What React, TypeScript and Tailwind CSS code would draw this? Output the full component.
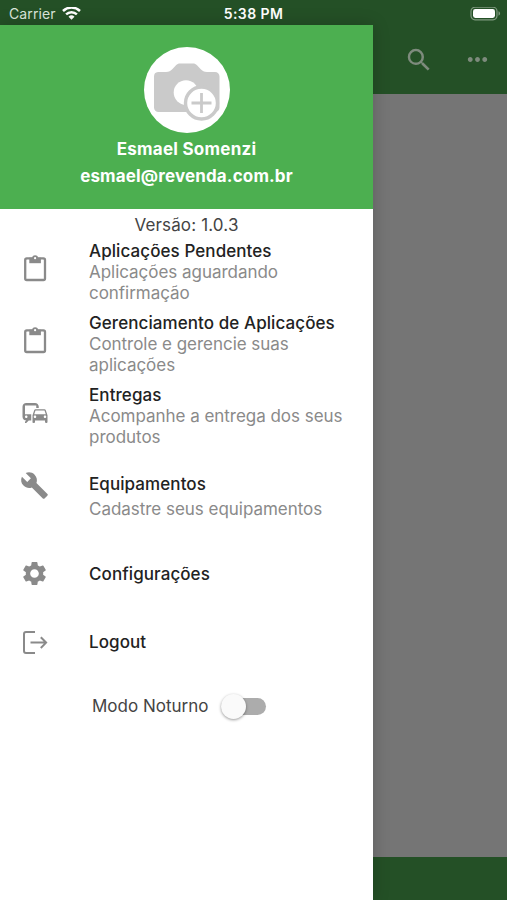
import { useState } from "react";
import type { ReactNode } from "react";
import {
  MdBuild,
  MdCommute,
  MdMoreHoriz,
  MdSearch,
  MdSettings,
} from "react-icons/md";

type MenuItem = {
  title: string;
  lines?: string[];
  icon: ReactNode;
  row: string;
  text: string;
};

const ClipboardIcon = () => (
  <svg width="29" height="29" viewBox="0 0 29 29" fill="none">
    <rect x="5.2" y="3.4" width="19.8" height="21.6" rx="1.6" stroke="currentColor" strokeWidth="2.3" />
    <path d="M9.300 2.700h11.600v5.500H9.300z" fill="currentColor" />
    <circle cx="15.100" cy="3.200" r="3" fill="currentColor" />
    <circle cx="15.100" cy="3.200" r="1.100" fill="#fff" />
  </svg>
);

const LogoutIcon = () => (
  <svg width="29" height="29" viewBox="0 0 29 29" fill="none" stroke="currentColor" strokeWidth="2">
    <path d="M15 4H6a2 2 0 0 0-2 2v17a2 2 0 0 0 2 2h9" />
    <path d="M10.500 14.600H26M20.800 9.200l5.300 5.400-5.300 5.400" />
  </svg>
);

const menu: MenuItem[] = [
  {
    title: "Aplicações Pendentes",
    lines: ["Aplicações aguardando", "confirmação"],
    icon: <ClipboardIcon />,
    row: "h-[72px] items-center",
    text: "pt-[6px] leading-[21px]",
  },
  {
    title: "Gerenciamento de Aplicações",
    lines: ["Controle e gerencie suas", "aplicações"],
    icon: <ClipboardIcon />,
    row: "h-[72px] items-center",
    text: "pt-[6px] leading-[21px]",
  },
  {
    title: "Entregas",
    lines: ["Acompanhe a entrega dos seus", "produtos"],
    icon: <MdCommute size={30} />,
    row: "h-[72px] items-center",
    text: "pt-[6px] leading-[21px]",
  },
  {
    title: "Equipamentos",
    lines: ["Cadastre seus equipamentos"],
    icon: <MdBuild size={29} />,
    row: "h-[90px] items-start pt-[22px]",
    text: "pt-[1px] leading-[25px]",
  },
  {
    title: "Configurações",
    icon: <MdSettings size={29} />,
    row: "h-[69px] items-center",
    text: "pt-[2px] leading-[21px]",
  },
  {
    title: "Logout",
    icon: <LogoutIcon />,
    row: "h-[68px] items-center",
    text: "leading-[21px]",
  },
];

function StatusBar() {
  return (
    <div className="grid h-[25px] shrink-0 grid-cols-3 items-center bg-[#245026] pt-[2px] text-[14px] leading-none text-white">
      <div className="flex items-center gap-[6px] pl-[9px] text-[#dbe5db]">
        <span className="tracking-[0.1px]">Carrier</span>
        <svg width="19" height="14" viewBox="0 0 19 14" fill="none" stroke="#fff" strokeWidth="2.5">
          <path d="M1 4a12.2 12.2 0 0 1 17 0" />
          <path d="M4.1 7.400a7.8 7.8 0 0 1 10.8 0" />
          <path d="M9.5 12.700 6.5 9.700a4.3 4.3 0 0 1 6 0z" fill="#fff" stroke="none" />
        </svg>
      </div>
      <span className="text-center font-semibold tracking-[0.4px]">5:38 PM</span>
      <div className="flex justify-end pr-[6px]">
        <svg width="31" height="14" viewBox="0 0 31 14">
          <rect x="1" y="0.2" width="26" height="12.6" rx="4" fill="none" stroke="#7f997f" strokeWidth="1.2" />
          <rect x="3" y="2.1" width="22" height="8.8" rx="2.3" fill="#fff" />
          <path d="M28.5 4.3v4.4c1-.4 1.6-1.2 1.6-2.2s-.6-1.8-1.6-2.2z" fill="#7f997f" />
        </svg>
      </div>
    </div>
  );
}

function Avatar() {
  return (
    <svg width="86" height="86" viewBox="0 0 86 86">
      <circle cx="43" cy="43" r="43" fill="#fff" />
      <path
        d="M14 25h8c3 0 4.500-1 6.500-3l3.500-3.700c1.200-1.200 2.300-1.800 4-1.800h13c1.700 0 2.800.6 4 1.800l3.500 3.700c2 2 3.500 3 6.500 3h8a4.500 4.500 0 0 1 4.500 4.500v31a4.500 4.500 0 0 1-4.500 4.500H14.500a4.500 4.500 0 0 1-4.500-4.500v-31A4.500 4.500 0 0 1 14 25z"
        fill="#cacaca"
      />
      <circle cx="42" cy="45.500" r="12.300" fill="#fff" />
      <circle cx="57.500" cy="56" r="16" fill="#fff" stroke="#cacaca" strokeWidth="3.400" />
      <path d="M57.500 46v20M47.500 56h20" stroke="#cacaca" strokeWidth="2.800" />
    </svg>
  );
}

export default function App() {
  const [nightMode, setNightMode] = useState(false);

  return (
    <div className="flex h-[900px] w-[507px] flex-col overflow-hidden bg-[#757575] font-['Inter',sans-serif]">
      <StatusBar />

      <div className="flex min-h-0 flex-1">
        <aside className="z-10 flex w-[373px] shrink-0 flex-col bg-white shadow-[0_0_16px_rgba(0,0,0,0.2)]">
          <header className="flex h-[184px] shrink-0 flex-col items-center bg-[#4caf50] pt-[22px] text-[17px] font-bold text-white">
            <Avatar />
            <p className="mt-[3px] leading-[26px] tracking-[0.25px]">Esmael Somenzi</p>
            <p className="leading-[28px] tracking-[0.15px]">esmael@revenda.com.br</p>
          </header>

          <p className="h-[24px] pt-[5px] text-center text-[17px] leading-[22px] tracking-[0.15px] text-[#444]">
            Versão: 1.0.3
          </p>

          <nav>
            {menu.map((item) => (
              <a key={item.title} className={`flex ${item.row}`}>
                <span className="flex w-[89px] shrink-0 pl-[20px] text-[#8a8a8a]">
                  {item.icon}
                </span>
                <span className={`flex flex-col whitespace-nowrap text-[17px] ${item.text}`}>
                  <span className="font-medium tracking-[0.08px] text-[#222]">{item.title}</span>
                  {item.lines?.map((line) => (
                    <span key={line} className="tracking-[-0.03px] text-[#8a8a8a]">
                      {line}
                    </span>
                  ))}
                </span>
              </a>
            ))}
          </nav>

          <div className="flex h-[60px] items-center pl-[92px]">
            <span className="w-[129px] pt-[1px] text-[17px] text-[#444]">Modo Noturno</span>
            <button
              role="switch"
              aria-checked={nightMode}
              aria-label="Modo Noturno"
              onClick={() => setNightMode(!nightMode)}
              className={`flex h-[17px] w-[45px] items-center rounded-full bg-[#acacac] ${nightMode ? "justify-end" : ""}`}
            >
              <span className="size-[25px] rounded-full bg-[#fafafa] shadow-[0_1px_3px_rgba(0,0,0,0.4)]" />
            </button>
          </div>
        </aside>

        <main className="flex min-w-0 flex-1 flex-col">
          <div className="flex h-[69px] shrink-0 items-center justify-between bg-[#245026] pr-[15px] pl-[31px] text-[#7e8b7d]">
            <MdSearch size={30} />
            <MdMoreHoriz size={29} />
          </div>
          <div className="flex-1" />
          <div className="h-[43px] bg-[#245026]" />
        </main>
      </div>
    </div>
  );
}
